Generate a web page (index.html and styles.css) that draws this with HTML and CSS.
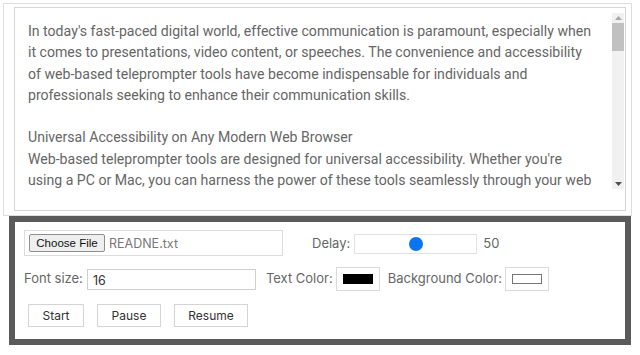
FILE: index.html
```html
<!DOCTYPE html>
<html>
<head>
<meta charset="utf-8">
<link rel="stylesheet" href="styles.css">
</head>
<body>
<div class="frame">
  <div class="prompter">
    <div class="viewport">
      <div class="script">
        <p>In today's fast-paced digital world, effective communication is paramount, especially when it comes to presentations, video content, or speeches. The convenience and accessibility of web-based teleprompter tools have become indispensable for individuals and professionals seeking to enhance their communication skills.</p>
        <p>Universal Accessibility on Any Modern Web Browser<br>Web-based teleprompter tools are designed for universal accessibility. Whether you're using a PC or Mac, you can harness the power of these tools seamlessly through your web browser. There is no need to install any additional software.</p>
      </div>
      <div class="vscroll">
        <div class="vbtn vbtn-up"><svg width="7" height="4" viewBox="0 0 7 4"><polygon points="3.5,0 7,4 0,4" fill="#a8a8a8"/></svg></div>
        <div class="vtrack"><div class="vthumb"></div></div>
        <div class="vbtn vbtn-down"><svg width="7" height="4" viewBox="0 0 7 4"><polygon points="0,0 7,0 3.5,4" fill="#505050"/></svg></div>
      </div>
    </div>
  </div>
</div>
<div class="panel">
  <div class="row row-1">
    <div class="filebox"><button class="choose">Choose File</button><span class="filename">READNE.txt</span></div>
    <span class="label delay-label">Delay:</span>
    <input class="slider" type="range" min="0" max="100" value="50">
    <span class="value">50</span>
  </div>
  <div class="row row-2">
    <span class="label">Font size:</span>
    <div class="textinput">16</div>
    <span class="label text-color-label">Text Color:</span>
    <div class="colorbox"><span class="swatch swatch-black"></span></div>
    <span class="label bg-color-label">Background Color:</span>
    <div class="colorbox"><span class="swatch swatch-white"></span></div>
  </div>
  <div class="row row-3">
    <button class="btn btn-start">Start</button>
    <button class="btn btn-pause">Pause</button>
    <button class="btn btn-resume">Resume</button>
  </div>
</div>
</body>
</html>
```
FILE: styles.css
```css
html, body {
  margin: 0;
  padding: 0;
  background: #ffffff;
}
body {
  font-family: Inter, "Noto Sans", sans-serif;
  color: #555;
}
.frame {
  box-sizing: border-box;
  margin: 3px 0 0 3px;
  width: 629px;
  border: 1px solid #dedede;
  padding: 3px 5px 4px 10px;
}
.prompter {
  box-sizing: border-box;
  width: 612px;
  height: 204px;
  border: 1px solid #d6d6d6;
  padding: 5px 1px 21px 0;
}
.viewport {
  display: flex;
  height: 176px;
}
.script {
  box-sizing: border-box;
  width: 597px;
  height: 176px;
  overflow: hidden;
  padding: 8px 14px 0 13px;
  font-family: Roboto, "Liberation Sans", sans-serif;
  font-size: 14.1px;
  line-height: 21.3px;
  color: #666;
}
.script p {
  margin: 0 0 21.3px 0;
}
.vscroll {
  width: 12px;
  display: flex;
  flex-direction: column;
  background: #f1f1f1;
}
.vbtn {
  height: 10px;
  display: flex;
  align-items: center;
  justify-content: center;
}
.vbtn svg {
  display: block;
}
.vtrack {
  flex: 1;
}
.vthumb {
  height: 28px;
  background: #c1c1c1;
}

.panel {
  box-sizing: border-box;
  margin-left: 9px;
  width: 622px;
  height: 129px;
  border: 6px solid #5a5a5a;
  padding: 8px 0 0 9px;
}
.row {
  display: flex;
  align-items: center;
}
.label {
  font-size: 13px;
  color: #666;
  white-space: nowrap;
}
.row-1 {
  height: 26px;
}
.filebox {
  box-sizing: border-box;
  width: 259px;
  height: 26px;
  border: 1px solid #dcdcdc;
  display: flex;
  align-items: center;
  padding-left: 4px;
}
.choose {
  box-sizing: border-box;
  height: 18px;
  width: 76px;
  padding: 0;
  margin: 0;
  border: 1px solid #8f8f8f;
  border-radius: 2px;
  background: #efefef;
  font-family: "Liberation Sans", Arial, sans-serif;
  font-size: 11.5px;
  color: #111;
}
.filename {
  margin-left: 4px;
  font-size: 12.5px;
  color: #777;
}
.delay-label {
  margin-left: 29px;
}
.slider {
  -webkit-appearance: none;
  appearance: none;
  box-sizing: border-box;
  margin: 1px 0 0 4px;
  width: 123px;
  height: 20px;
  border: 1px solid #e2e2e2;
  background: transparent;
  padding: 0;
}
.slider::-webkit-slider-runnable-track {
  background: transparent;
  height: 14px;
}
.slider::-webkit-slider-thumb {
  -webkit-appearance: none;
  width: 14px;
  height: 14px;
  border-radius: 50%;
  background: #0a75f0;
  border: none;
}
.value {
  margin-left: 6px;
  font-size: 13px;
  color: #666;
}
.row-2 {
  margin-top: 11px;
  height: 24px;
}
.row-2 .label {
  margin-top: -2px;
}
.textinput {
  box-sizing: border-box;
  margin-left: 4px;
  width: 169px;
  height: 21px;
  border: 1px solid #cfcfcf;
  font-size: 12.5px;
  line-height: 14px;
  color: #333;
  padding: 4px 0 0 5px;
}
.text-color-label {
  margin-left: 10px;
}
.colorbox {
  box-sizing: border-box;
  margin-left: 3px;
  width: 44px;
  height: 24px;
  border: 1px solid #dadada;
  display: flex;
  align-items: center;
  justify-content: center;
}
.swatch {
  box-sizing: border-box;
  width: 30px;
  height: 10px;
}
.swatch-black {
  background: #000;
}
.swatch-white {
  background: #fff;
  border: 1px solid #777;
}
.bg-color-label {
  margin-left: 8px;
}
.row-3 {
  margin-top: 13px;
  padding-left: 4px;
  gap: 13px;
}
.btn {
  box-sizing: border-box;
  height: 23px;
  margin: 0;
  padding: 0;
  border: 1px solid #d4d4d4;
  background: #fff;
  font-family: Inter, "Noto Sans", sans-serif;
  font-size: 12px;
  color: #333;
}
.btn-start { width: 56px; }
.btn-pause { width: 64px; }
.btn-resume { width: 74px; }
```
